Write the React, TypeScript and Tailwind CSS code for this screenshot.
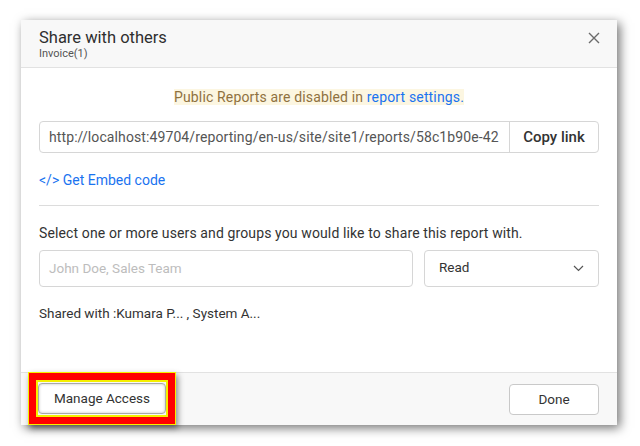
import React from "react";

const font = { fontFamily: "Roboto, 'Noto Sans', sans-serif" };

const CloseIcon = () => (
  <svg width="12" height="12" viewBox="0 0 12 12" fill="none" stroke="#6b6b6b" strokeWidth={1.4}>
    <path d="M1 1l10 10M11 1L1 11" />
  </svg>
);

const Chevron = () => (
  <svg width="11" height="7" viewBox="0 0 11 7" fill="none" stroke="#555" strokeWidth={1.2}>
    <path d="M1 1l4.5 4.5L10 1" />
  </svg>
);

export default function App() {
  return (
    <div className="w-[640px] h-[446px] bg-white pt-[20px] pl-[21px]" style={font}>
      <div className="w-[596px] h-[405px] bg-white flex flex-col shadow-[3px_3px_10px_rgba(0,0,0,0.55)]">
        {/* Header */}
        <div className="h-[48px] bg-[#f8f8f8] border-b border-[#e2e2e2] flex items-start justify-between pl-[18px] pr-[16px] pt-[8px]">
          <div>
            <div className="text-[16.5px] leading-[19px] text-[#2f2f2f]">Share with others</div>
            <div className="text-[11px] leading-[14px] text-[#555]">Invoice(1)</div>
          </div>
          <div className="pt-[4px] pr-[1px]">
            <CloseIcon />
          </div>
        </div>

        {/* Body */}
        <div className="flex-1 px-[18px] flex flex-col">
          <div className="mt-[21px] text-center text-[14px] leading-[16px] tracking-[0.15px]">
            <span className="bg-[#fcf6e1] text-[#8f7140]">
              Public Reports are disabled in <span className="text-[#1a73f0]">report settings.</span>
            </span>
          </div>

          <div className="mt-[16px] h-[32px] flex border border-[#d6d6d6] rounded-[4px]">
            <div className="flex-1 flex items-center pl-[9px] text-[14px] tracking-[0.1px] text-[#555] overflow-hidden whitespace-nowrap">
              http://localhost:49704/reporting/en-us/site/site1/reports/58c1b90e-42
            </div>
            <div className="w-[89px] border-l border-[#d6d6d6] flex items-center justify-center text-[15px] font-medium text-[#333]">
              Copy link
            </div>
          </div>

          <div className="mt-[18px] text-[14px] leading-[18px] text-[#1a73f0]">&lt;/&gt; Get Embed code</div>

          <div className="mt-[16px] border-t border-[#dcdcdc]" />

          <div className="mt-[18px] text-[14px] leading-[18px] tracking-[0.12px] text-[#333]">
            Select one or more users and groups you would like to share this report with.
          </div>

          <div className="mt-[8px] flex gap-[11px]">
            <div className="w-[374px] h-[37px] border border-[#d6d6d6] rounded-[4px] flex items-center pl-[9px] text-[13.5px] text-[#bdbdbd]">
              John Doe, Sales Team
            </div>
            <div className="flex-1 h-[37px] border border-[#d6d6d6] rounded-[4px] flex items-center justify-between pl-[14px] pr-[14px] text-[13.5px] text-[#333]">
              <span className="-mt-[2px]">Read</span>
              <Chevron />
            </div>
          </div>

          <div className="mt-[17px] text-[13.5px] leading-[18px] text-[#333]">Shared with :Kumara P... , System A...</div>
        </div>

        {/* Footer */}
        <div className="h-[53px] bg-[#f8f8f8] border-t border-[#e2e2e2] flex items-center justify-between pl-[7px] pr-[18px]">
          <div className="h-[53px] -mt-px border border-[#f5f000] shadow-[2px_3px_6px_rgba(0,0,0,0.45)]">
            <div className="h-full border-[7px] border-[#ff0000]">
              <div className="h-full border-[2px] border-[#f5f000] bg-[#f8f8f8] flex items-center">
                <button className="h-[31px] w-[128px] rounded-[4px] border border-[#a9a9a9] bg-white shadow-[inset_0_0_3px_rgba(0,0,0,0.25)] text-[13.5px] text-[#333]">
                  Manage Access
                </button>
              </div>
            </div>
          </div>
          <button className="h-[31px] w-[90px] rounded-[4px] border border-[#c9c9c9] bg-white text-[13.5px] text-[#333]">
            Done
          </button>
        </div>
      </div>
    </div>
  );
}
